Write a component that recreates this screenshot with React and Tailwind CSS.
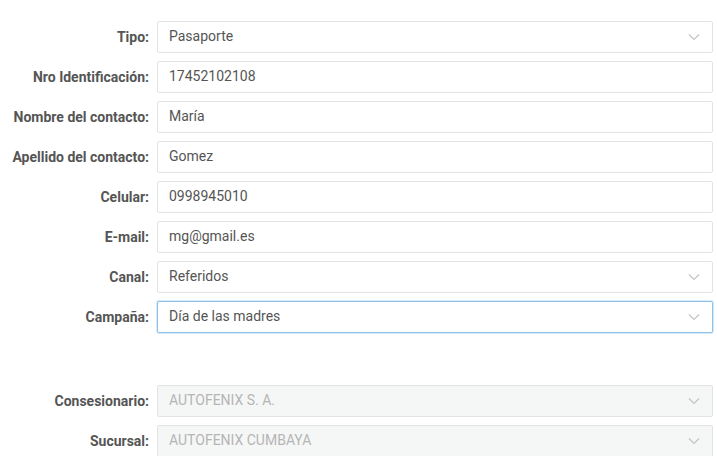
import React from "react";

const Chevron = () => (
  <svg width="12" height="8" viewBox="0 0 12 8" className="absolute right-[12px] top-1/2 -translate-y-1/2" fill="none">
    <path d="M1 1.5 L6 6.5 L11 1.5" stroke="#c4c4c4" strokeWidth="1.2" />
  </svg>
);

function Row({ label, value, select, focus, disabled }) {
  const border = focus ? "border-[#8fc3ec] shadow-[0_0_0_1px_rgba(143,195,236,0.35)]" : "border-[#e3e3e3]";
  const bg = disabled ? "bg-[#f5f6f6] text-[#b5b5b5]" : "bg-white text-[#555]";
  return (
    <div className="flex items-center h-[32px]">
      <div className="w-[157px] shrink-0 pr-[8px] text-right font-bold text-[14px] leading-[32px] text-[#555] whitespace-nowrap">{label}</div>
      <div className={`relative flex items-center w-[556px] shrink-0 h-[32px] border rounded-[2px] pl-[11px] pb-[1px] text-[14px] ${border} ${bg}`}>
        {value}
        {select && <Chevron />}
      </div>
    </div>
  );
}

export default function App() {
  return (
    <div className="w-[717px] h-[456px] bg-white overflow-hidden pt-[21px]" style={{ fontFamily: "Roboto, 'Liberation Sans', sans-serif" }}>
      <div className="flex flex-col gap-[8px]">
        <Row label="Tipo:" value="Pasaporte" select />
        <Row label="Nro Identificación:" value="17452102108" />
        <Row label="Nombre del contacto:" value="María" />
        <Row label="Apellido del contacto:" value="Gomez" />
        <Row label="Celular:" value="0998945010" />
        <Row label="E-mail:" value="mg@gmail.es" />
        <Row label="Canal:" value="Referidos" select />
        <Row label="Campaña:" value="Día de las madres" select focus />
      </div>
      <div className="flex flex-col gap-[8px] mt-[52px]">
        <Row label="Consesionario:" value="AUTOFENIX S. A." select disabled />
        <Row label="Sucursal:" value="AUTOFENIX CUMBAYA" select disabled />
      </div>
    </div>
  );
}
